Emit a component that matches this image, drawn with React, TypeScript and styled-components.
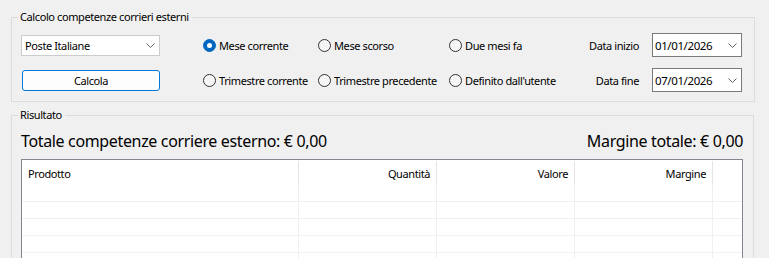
import React from 'react';
import styled, { createGlobalStyle } from 'styled-components';

const Global = createGlobalStyle`
  html, body { margin: 0; padding: 0; background: #f0f0f0; }
  body {
    font-family: "Noto Sans", "Segoe UI", sans-serif;
    font-size: 11px;
    letter-spacing: -0.4px;
    color: #000;
  }
  * { box-sizing: border-box; }
`;

const Page = styled.div`
  width: 769px;
  height: 258px;
  overflow: hidden;
  padding: 9px 14px 0 11px;
  display: flex;
  flex-direction: column;
  gap: 5px;
`;

const Group = styled.fieldset<{ $pad: string; $mr?: number }>`
  margin: 0 ${p => p.$mr ?? 0}px 0 0;
  padding: ${p => p.$pad};
  border: 1px solid #dcdcdc;
  min-width: 0;
`;

const Legend = styled.legend`
  margin-left: -3px;
  padding: 0 3px 0 2px;
  height: 16px;
  line-height: 16px;
`;

const ControlGrid = styled.div`
  display: grid;
  grid-template-columns: 182px 115px 131px 1fr auto 103px;
  grid-template-rows: 24px 24px;
  row-gap: 11px;
  align-items: center;
`;

const Combo = styled.div`
  width: 139px;
  height: 21px;
  background: #fff;
  border: 1px solid #cccccc;
  display: flex;
  align-items: center;
  justify-content: space-between;
  padding: 0 4px 0 3px;
`;

const Button = styled.button`
  width: 138px;
  height: 21px;
  margin-left: 1px;
  background: #fdfdfd;
  border: 1px solid #0078d7;
  border-radius: 3px;
  font: inherit;
  letter-spacing: inherit;
  color: #000;
  padding: 0;
`;

const RadioItem = styled.label`
  display: flex;
  align-items: center;
  gap: 3px;
  white-space: nowrap;
`;

const RadioDot = styled.span<{ $on?: boolean }>`
  width: 13px;
  height: 13px;
  border-radius: 50%;
  flex: none;
  background: ${p => (p.$on ? '#0067c0' : '#f5f5f5')};
  border: 1px solid ${p => (p.$on ? '#0067c0' : '#333')};
  display: flex;
  align-items: center;
  justify-content: center;
  &::after {
    content: '';
    display: ${p => (p.$on ? 'block' : 'none')};
    width: 5px;
    height: 5px;
    border-radius: 50%;
    background: #fff;
  }
`;

const FieldLabel = styled.span`
  justify-self: end;
  white-space: nowrap;
`;

const DateBox = styled.div`
  justify-self: end;
  width: 90px;
  height: 24px;
  background: #fff;
  border: 1px solid #7a7a7a;
  display: flex;
  align-items: center;
  justify-content: space-between;
  padding: 0 4px 0 2px;
  font-size: 11.5px;
`;

const Summary = styled.div`
  display: flex;
  justify-content: space-between;
  font-size: 16px;
  letter-spacing: -0.35px;
  line-height: 22px;
  margin-bottom: 7px;
`;

const Table = styled.div`
  width: 722px;
  border: 1px solid #828790;
  background: #fff;
  height: 120px;
`;

const COLS = '277px 138px 138px 138px 1fr';

const HeaderRow = styled.div`
  display: grid;
  grid-template-columns: ${COLS};
  height: 25px;
`;

const HeaderCell = styled.div<{ $right?: boolean; $last?: boolean }>`
  display: flex;
  align-items: center;
  justify-content: ${p => (p.$right ? 'flex-end' : 'flex-start')};
  padding: ${p => (p.$right ? '0 6px 0 0' : '0 0 0 6px')};
  border-right: ${p => (p.$last ? 'none' : '1px solid #e5e5e5')};
  margin: 1px 0 0;
`;

const BodyRow = styled.div`
  display: grid;
  grid-template-columns: ${COLS};
  height: 17px;
  border-bottom: 1px solid #f0f0f0;
`;

const BodyCell = styled.div<{ $last?: boolean }>`
  border-right: ${p => (p.$last ? 'none' : '1px solid #f0f0f0')};
`;

const Chevron = () => (
  <svg width="9" height="5" viewBox="0 0 9 5" fill="none">
    <path d="M0.5 0.5 L4.5 4.5 L8.5 0.5" stroke="#606060" strokeWidth="1" />
  </svg>
);

const Radio = ({ label, on }: { label: string; on?: boolean }) => (
  <RadioItem>
    <RadioDot $on={on} />
    {label}
  </RadioItem>
);

export default function App() {
  return (
    <>
      <Global />
      <Page>
        <Group $pad="8px 12px 9px 9px">
          <Legend>Calcolo competenze corrieri esterni</Legend>
          <ControlGrid>
            <Combo>
              <span>Poste Italiane</span>
              <Chevron />
            </Combo>
            <Radio label="Mese corrente" on />
            <Radio label="Mese scorso" />
            <Radio label="Due mesi fa" />
            <FieldLabel>Data inizio</FieldLabel>
            <DateBox>
              <span>01/01/2026</span>
              <Chevron />
            </DateBox>
            <Button>Calcola</Button>
            <Radio label="Trimestre corrente" />
            <Radio label="Trimestre precedente" />
            <Radio label="Definito dall'utente" />
            <FieldLabel>Data fine</FieldLabel>
            <DateBox>
              <span>07/01/2026</span>
              <Chevron />
            </DateBox>
          </ControlGrid>
        </Group>
        <Group $pad="7px 10px 0 9px" $mr={1}>
          <Legend>Risultato</Legend>
          <Summary>
            <span>Totale competenze corriere esterno: € 0,00</span>
            <span>Margine totale: € 0,00</span>
          </Summary>
          <Table>
            <HeaderRow>
              <HeaderCell>Prodotto</HeaderCell>
              <HeaderCell $right>Quantità</HeaderCell>
              <HeaderCell $right>Valore</HeaderCell>
              <HeaderCell $right>Margine</HeaderCell>
              <HeaderCell $last />
            </HeaderRow>
            {[0, 1, 2, 3, 4].map(i => (
              <BodyRow key={i}>
                <BodyCell />
                <BodyCell />
                <BodyCell />
                <BodyCell />
                <BodyCell $last />
              </BodyRow>
            ))}
          </Table>
        </Group>
      </Page>
    </>
  );
}
